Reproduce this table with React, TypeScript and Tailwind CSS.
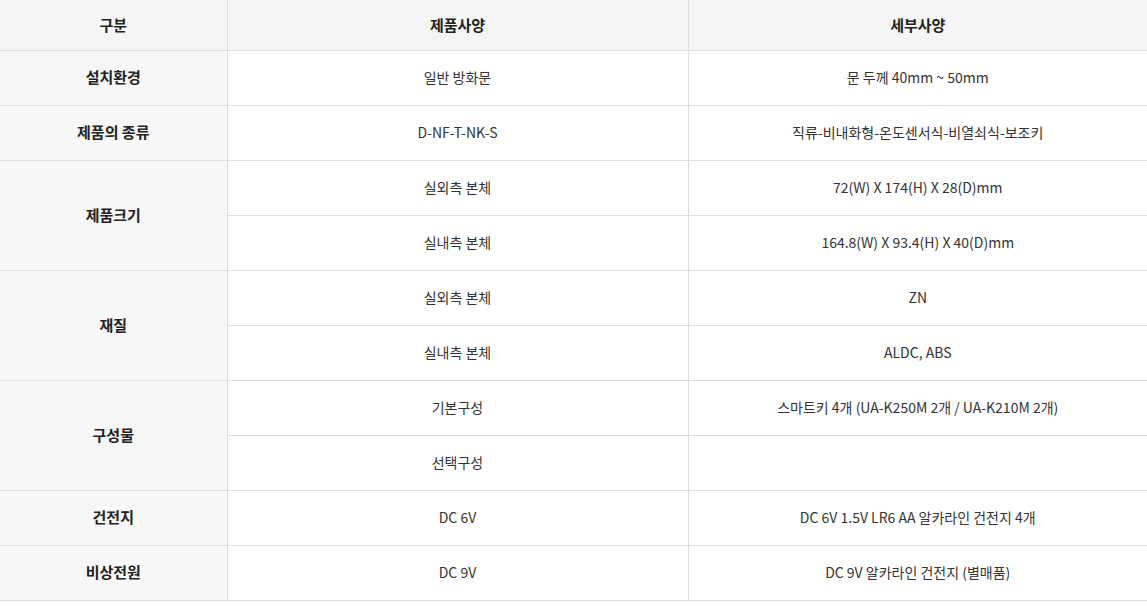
const ROWS: { label?: string; span?: number; spec: string; detail: string }[] = [
  { label: '설치환경', spec: '일반 방화문', detail: '문 두께 40mm ~ 50mm' },
  { label: '제품의 종류', spec: 'D-NF-T-NK-S', detail: '직류-비내화형-온도센서식-비열쇠식-보조키' },
  { label: '제품크기', span: 2, spec: '실외측 본체', detail: '72(W) X 174(H) X 28(D)mm' },
  { spec: '실내측 본체', detail: '164.8(W) X 93.4(H) X 40(D)mm' },
  { label: '재질', span: 2, spec: '실외측 본체', detail: 'ZN' },
  { spec: '실내측 본체', detail: 'ALDC, ABS' },
  { label: '구성물', span: 2, spec: '기본구성', detail: '스마트키 4개 (UA-K250M 2개 / UA-K210M 2개)' },
  { spec: '선택구성', detail: '' },
  { label: '건전지', spec: 'DC 6V', detail: 'DC 6V 1.5V LR6 AA 알카라인 건전지 4개' },
  { label: '비상전원', spec: 'DC 9V', detail: 'DC 9V 알카라인 건전지 (별매품)' },
];

export default function App() {
  return (
    <div className="w-[1147px] bg-white font-['Noto_Sans_CJK_KR','Noto_Sans',sans-serif]">
      <table className="w-full table-fixed border-collapse text-center">
        <colgroup>
          <col className="w-[227px]" />
          <col className="w-[461px]" />
          <col />
        </colgroup>
        <thead>
          <tr className="h-[50px] bg-[#f5f5f5] text-[15px] font-bold text-[#222]">
            <th className="border-b border-r border-[#dedede]">구분</th>
            <th className="border-b border-r border-[#dedede]">제품사양</th>
            <th className="border-b border-[#dedede]">세부사양</th>
          </tr>
        </thead>
        <tbody className="text-[14px] text-[#333]">
          {ROWS.map((row, i) => (
            <tr key={i} className="h-[55px]">
              {row.label && (
                <th
                  rowSpan={row.span}
                  className="border-b border-r border-[#dedede] bg-[#f7f7f7] text-[15px] font-bold text-[#222]"
                >
                  {row.label}
                </th>
              )}
              <td className="border-b border-r border-[#dedede]">{row.spec}</td>
              <td className="border-b border-[#dedede]">{row.detail}</td>
            </tr>
          ))}
        </tbody>
      </table>
    </div>
  );
}
